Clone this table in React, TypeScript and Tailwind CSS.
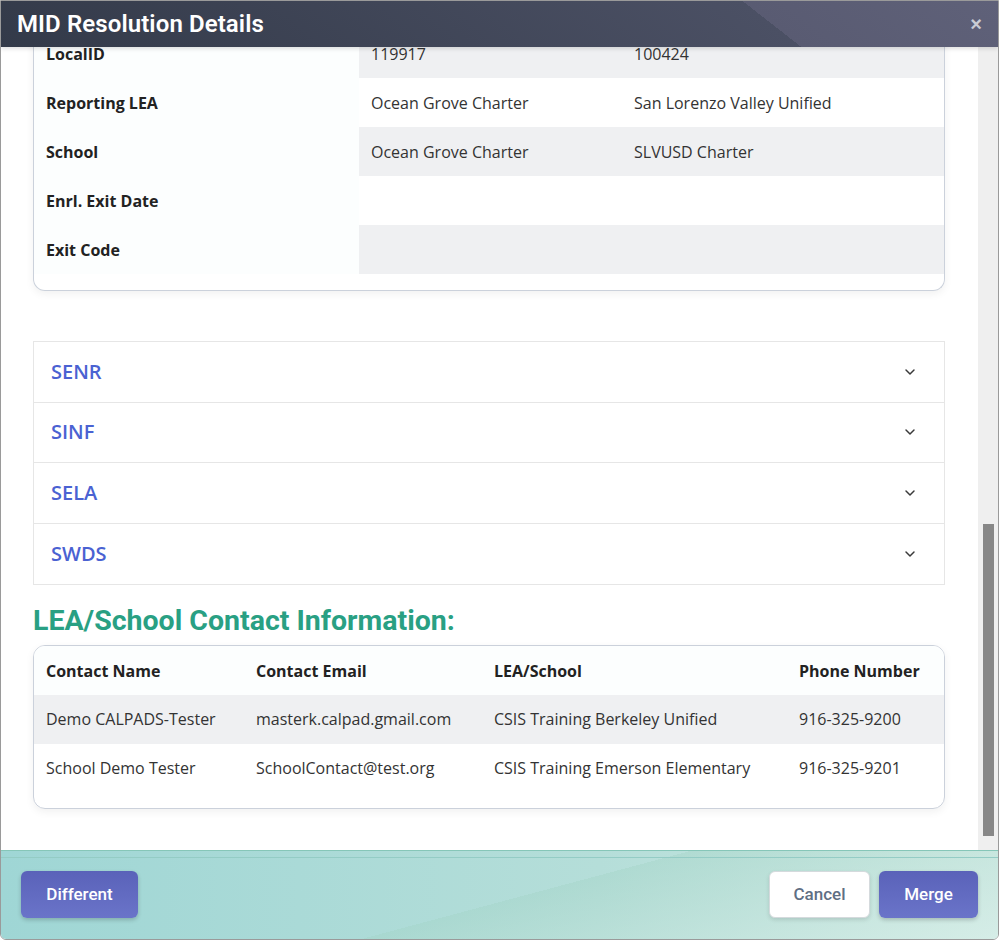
import { ChevronDown } from "lucide-react";

const detailRows = [
  { label: "LocalID", a: "119917", b: "100424", shade: true },
  { label: "Reporting LEA", a: "Ocean Grove Charter", b: "San Lorenzo Valley Unified", shade: false },
  { label: "School", a: "Ocean Grove Charter", b: "SLVUSD Charter", shade: true },
  { label: "Enrl. Exit Date", a: "", b: "", shade: false },
  { label: "Exit Code", a: "", b: "", shade: true },
];

const sections = ["SENR", "SINF", "SELA", "SWDS"];

const contacts = [
  { name: "Demo CALPADS-Tester", email: "masterk.calpad.gmail.com", lea: "CSIS Training Berkeley Unified", phone: "916-325-9200" },
  { name: "School Demo Tester", email: "SchoolContact@test.org", lea: "CSIS Training Emerson Elementary", phone: "916-325-9201" },
];

export default function App() {
  return (
    <div className="w-[999px] h-[940px] flex flex-col border border-[#9a9a9a] rounded-b-md overflow-hidden bg-white font-['Open_Sans',sans-serif]">
      {/* Header */}
      <div className="h-[46px] shrink-0 flex items-center justify-between pl-[16px] pr-[16px] bg-[linear-gradient(38deg,#333a49_0%,#4b5064_75.8%,#595b72_75.8%,#5f6179_100%)] shadow-[0_2px_4px_rgba(0,0,0,0.12)] z-10">
        <h1 className="text-white text-[24px] font-semibold font-['Roboto',sans-serif] tracking-[0.1px]">
          MID Resolution Details
        </h1>
        <span className="text-[#c9cbd3] text-[20px] font-bold leading-none font-['Liberation_Sans',sans-serif]">×</span>
      </div>

      {/* Body */}
      <div className="flex-1 flex min-h-0 bg-[#efefef]">
        <div className="flex-1 overflow-hidden bg-white pl-[32px] pr-[33px]">
          {/* Record details card */}
          <div className="-mt-[18px] border border-t-0 border-[#cbd1db] rounded-b-xl shadow-[0_3px_8px_rgba(0,0,0,0.06)] pb-4 overflow-hidden">
            {detailRows.map((r) => (
              <div key={r.label} className="flex h-[49px] text-[16px]">
                <div className="w-[325px] shrink-0 flex items-center pl-[12px] bg-[#fcfefe] font-bold text-[#222]">
                  {r.label}
                </div>
                <div className={`flex-1 flex items-center text-[#333] ${r.shade ? "bg-[#eff0f2]" : "bg-white"}`}>
                  <div className="w-[263px] pl-[12px]">{r.a}</div>
                  <div className="pl-[12px]">{r.b}</div>
                </div>
              </div>
            ))}
          </div>

          {/* Accordion */}
          <div className="mt-[50px] border border-[#e6e6e6] divide-y divide-[#e6e6e6]">
            {sections.map((s) => (
              <div key={s} className="h-[60.5px] flex items-center justify-between pl-[17px] pr-[26px]">
                <span className="text-[#4a62d2] text-[20px] font-semibold">{s}</span>
                <ChevronDown size={16} strokeWidth={2.2} className="text-[#3a3a3a]" />
              </div>
            ))}
          </div>

          {/* Contacts */}
          <h2 className="mt-[20px] mb-[8px] leading-[32px] text-[28.5px] font-bold text-[#29a083] font-['Roboto',sans-serif]">
            LEA/School Contact Information:
          </h2>
          <div className="border border-[#cbd1db] rounded-xl shadow-[0_3px_8px_rgba(0,0,0,0.06)] pb-[16px] overflow-hidden text-[16px]">
            <div className="flex h-[49px] items-center bg-[#fcfefe] font-bold text-[#222]">
              <div className="w-[210px] pl-[12px]">Contact Name</div>
              <div className="w-[238px] pl-[12px]">Contact Email</div>
              <div className="w-[305px] pl-[12px]">LEA/School</div>
              <div className="pl-[12px]">Phone Number</div>
            </div>
            {contacts.map((c, i) => (
              <div key={c.name} className={`flex h-[48.5px] items-center text-[#333] ${i === 0 ? "bg-[#eff0f2]" : "bg-white"}`}>
                <div className="w-[210px] pl-[12px]">{c.name}</div>
                <div className="w-[238px] pl-[12px]">{c.email}</div>
                <div className="w-[305px] pl-[12px]">{c.lea}</div>
                <div className="pl-[12px]">{c.phone}</div>
              </div>
            ))}
          </div>
        </div>

        {/* Scrollbar */}
        <div className="w-[20px] shrink-0 relative">
          <div className="absolute left-[5px] top-[477px] w-[11px] h-[312px] bg-[#878787]" />
        </div>
      </div>

      {/* Footer */}
      <div className="h-[89px] shrink-0 border-t border-[#86c6b8] bg-[linear-gradient(165deg,transparent_0%,transparent_52%,rgba(160,210,195,0.35)_52%,rgba(220,240,235,0.6)_100%),linear-gradient(to_right,#9fd6d5,#b5ded9_60%,#cbe8e1)]">
        <div className="h-[7px] border-b border-[#94ccc5]" />
        <div className="flex items-center justify-between pt-[13px] pl-[20px] pr-[20px]">
          <button className="w-[117px] h-[47px] rounded-md bg-[linear-gradient(to_bottom,#5a62b9,#6a74c9)] text-white text-[17px] font-medium font-['Roboto',sans-serif] shadow-[0_2px_4px_rgba(0,0,0,0.2)]">
            Different
          </button>
          <div className="flex gap-[9px]">
            <button className="w-[101px] h-[47px] rounded-md bg-white border border-[#d5dadd] text-[#5f6f84] text-[17px] font-medium font-['Roboto',sans-serif] shadow-[0_2px_4px_rgba(0,0,0,0.12)]">
              Cancel
            </button>
            <button className="w-[99px] h-[47px] rounded-md bg-[linear-gradient(to_bottom,#5a62b9,#6a74c9)] text-white text-[17px] font-medium font-['Roboto',sans-serif] shadow-[0_2px_4px_rgba(0,0,0,0.2)]">
              Merge
            </button>
          </div>
        </div>
      </div>
    </div>
  );
}
